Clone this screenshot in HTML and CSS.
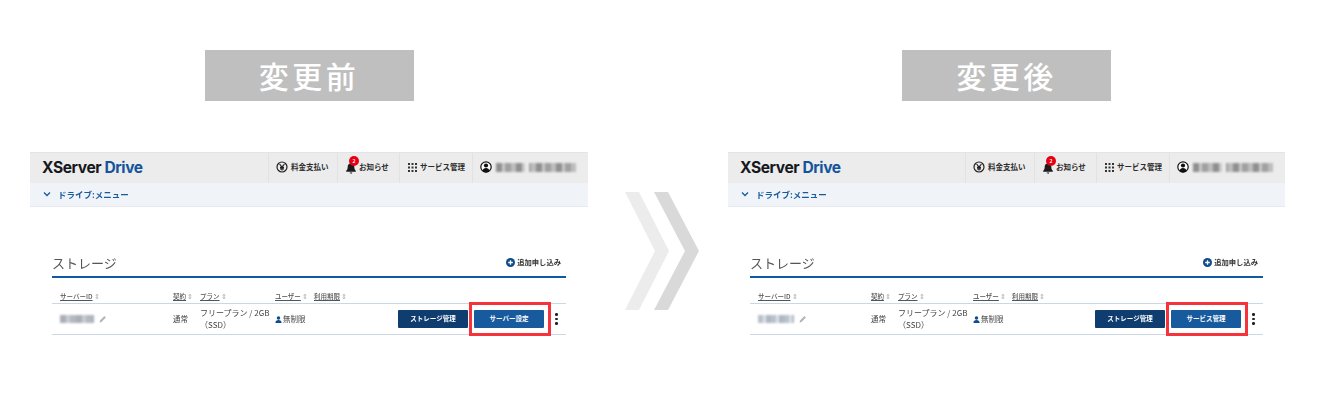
FILE: index.html
```html
<!DOCTYPE html>
<html lang="ja">
<head>
<meta charset="utf-8">
<title>変更前 変更後</title>
<link rel="stylesheet" href="styles.css">
</head>
<body>
<svg class="sprite" width="0" height="0" aria-hidden="true">
  <symbol id="yen" viewBox="0 0 12 12"><circle cx="6" cy="6" r="5" fill="none" stroke="#222" stroke-width="1.2"/><path d="M3.6 3 6 6l2.4-3M6 6v3.4M4 6.4h4M4 7.9h4" fill="none" stroke="#222" stroke-width="1.2"/></symbol>
  <symbol id="bell" viewBox="0 0 10 12"><path d="M5 .5c.6 0 1 .4 1 1 1.6.5 2.3 1.700 2.300 3.300 0 2 .5 3 1.500 4v1H.2v-1c1-1 1.500-2 1.500-4C1.700 3.200 2.400 2 4 1.500c0-.6.4-1 1-1ZM3.700 10.600h2.600C6.200 11.400 5.700 11.800 5 11.800s-1.200-.4-1.300-1.200Z" fill="#1b1b1b"/></symbol>
  <symbol id="grid" viewBox="0 0 9 9"><path d="M0 0h2v2H0zM3.500 0h2v2h-2zM7 0h2v2H7zM0 3.500h2v2H0zM3.500 3.500h2v2h-2zM7 3.500h2v2H7zM0 7h2v2H0zM3.500 7h2v2h-2zM7 7h2v2H7z" fill="#333"/></symbol>
  <symbol id="user-c" viewBox="0 0 12 12"><circle cx="6" cy="6" r="5.200" fill="#fff" stroke="#111" stroke-width="1.200"/><circle cx="6" cy="4.500" r="2.100" fill="#111"/><path d="M2.500 10c.3-2 1.700-3 3.500-3s3.200 1 3.500 3a5 5 0 0 1-7 0Z" fill="#111"/></symbol>
  <symbol id="user" viewBox="0 0 8 8"><circle cx="4" cy="2.200" r="2" fill="#0f4c8a"/><path d="M.5 8c0-2.300 1.400-3.300 3.500-3.300S7.500 5.700 7.500 8Z" fill="#0f4c8a"/></symbol>
  <symbol id="pencil" viewBox="0 0 8 8"><path d="M.6 7.400 1 5.500 5.400 1.100l1.500 1.500L2.500 7Z" fill="#b5b5b5"/></symbol>
  <symbol id="plus" viewBox="0 0 9 9"><circle cx="4.500" cy="4.500" r="4.500" fill="#0f4c8a"/><path d="M2.200 4.500h4.600M4.500 2.200v4.600" stroke="#fff" stroke-width="1.300"/></symbol>
  <symbol id="chev" viewBox="0 0 8 6"><path d="M1 1.500 4 4.500l3-3" fill="none" stroke="#175a9e" stroke-width="1.300"/></symbol>
</svg>

<main class="page">
  <section class="col">
    <h2 class="label">変更前</h2>
    <div class="panel">
      <header class="topbar">
        <div class="logo">XServer <span class="logo-blue">Drive</span></div>
        <nav class="topnav">
          <a class="nav-item nav-pay"><svg class="ic12"><use href="#yen"/></svg>料金支払い</a>
          <a class="nav-item nav-news"><span class="bell"><svg class="ic-bell"><use href="#bell"/></svg><i class="badge">2</i></span>お知らせ</a>
          <a class="nav-item nav-svc"><svg class="ic9"><use href="#grid"/></svg>サービス管理</a>
          <a class="nav-item nav-user"><svg class="ic12"><use href="#user-c"/></svg><span class="mosaic mosaic-user"></span></a>
        </nav>
      </header>
      <div class="menubar"><svg class="ic-chev"><use href="#chev"/></svg>ドライブ:メニュー</div>
      <div class="content">
        <div class="title-row">
          <h3 class="title">ストレージ</h3>
          <a class="add"><svg class="ic9"><use href="#plus"/></svg>追加申し込み</a>
        </div>
        <div class="thead">
          <span class="th c-id"><u>サーバーID</u> <span class="sort">⇕</span></span>
          <span class="th c-contract"><u>契約</u> <span class="sort">⇕</span></span>
          <span class="th c-plan"><u>プラン</u> <span class="sort">⇕</span></span>
          <span class="th c-users"><u>ユーザー</u> <span class="sort">⇕</span></span>
          <span class="th c-term"><u>利用期限</u> <span class="sort">⇕</span></span>
        </div>
        <div class="trow">
          <span class="c-id id-cell"><span class="mosaic mosaic-id"></span><svg class="ic8"><use href="#pencil"/></svg></span>
          <span class="c-contract cell-up">通常</span>
          <span class="c-plan plan">フリープラン / 2GB<br>（SSD）</span>
          <span class="c-users user-cell"><svg class="ic7"><use href="#user"/></svg><span class="cell-up">無制限</span></span>
          <span class="actions">
            <a class="btn btn-dark">ストレージ管理</a>
            <span class="hl"><a class="btn btn-blue">サーバー設定</a></span>
            <span class="dots"><i></i><i></i><i></i></span>
          </span>
        </div>
      </div>
    </div>
  </section>

  <div class="arrows">
    <svg width="75" height="118" viewBox="0 0 75 118"><path d="M0 0h14l30 59-30 59H0l30-59Z" fill="#ececec"/><path d="M29 0h14l31 59-31 59H29l31-59Z" fill="#d9d9d9"/></svg>
  </div>

  <section class="col col-after">
    <h2 class="label">変更後</h2>
    <div class="panel">
      <header class="topbar">
        <div class="logo">XServer <span class="logo-blue">Drive</span></div>
        <nav class="topnav">
          <a class="nav-item nav-pay"><svg class="ic12"><use href="#yen"/></svg>料金支払い</a>
          <a class="nav-item nav-news"><span class="bell"><svg class="ic-bell"><use href="#bell"/></svg><i class="badge">2</i></span>お知らせ</a>
          <a class="nav-item nav-svc"><svg class="ic9"><use href="#grid"/></svg>サービス管理</a>
          <a class="nav-item nav-user"><svg class="ic12"><use href="#user-c"/></svg><span class="mosaic mosaic-user"></span></a>
        </nav>
      </header>
      <div class="menubar"><svg class="ic-chev"><use href="#chev"/></svg>ドライブ:メニュー</div>
      <div class="content">
        <div class="title-row">
          <h3 class="title">ストレージ</h3>
          <a class="add"><svg class="ic9"><use href="#plus"/></svg>追加申し込み</a>
        </div>
        <div class="thead">
          <span class="th c-id"><u>サーバーID</u> <span class="sort">⇕</span></span>
          <span class="th c-contract"><u>契約</u> <span class="sort">⇕</span></span>
          <span class="th c-plan"><u>プラン</u> <span class="sort">⇕</span></span>
          <span class="th c-users"><u>ユーザー</u> <span class="sort">⇕</span></span>
          <span class="th c-term"><u>利用期限</u> <span class="sort">⇕</span></span>
        </div>
        <div class="trow">
          <span class="c-id id-cell"><span class="mosaic mosaic-id mosaic-light"></span><svg class="ic8"><use href="#pencil"/></svg></span>
          <span class="c-contract cell-up">通常</span>
          <span class="c-plan plan">フリープラン / 2GB<br>（SSD）</span>
          <span class="c-users user-cell"><svg class="ic7"><use href="#user"/></svg><span class="cell-up">無制限</span></span>
          <span class="actions">
            <a class="btn btn-dark">ストレージ管理</a>
            <span class="hl"><a class="btn btn-blue">サービス管理</a></span>
            <span class="dots"><i></i><i></i><i></i></span>
          </span>
        </div>
      </div>
    </div>
  </section>
</main>
</body>
</html>
```

FILE: styles.css
```css
* { box-sizing: border-box; }
html, body { margin: 0; padding: 0; background: #fff; }
body {
  width: 1324px;
  height: 413px;
  overflow: hidden;
  font-family: "Noto Sans CJK JP", "Noto Sans", sans-serif;
  color: #333;
}
.sprite { position: absolute; }
.page { display: flex; padding: 50px 0 0 30px; }
.col { width: 558px; display: flex; flex-direction: column; flex: none; }
.col-after { width: 557px; }
.arrows { width: 140px; flex: none; padding: 142px 0 0 37px; }
.arrows svg { display: block; }

.label {
  align-self: center;
  width: 209px;
  height: 51px;
  margin: 0 0 51px;
  background: #bfbfbf;
  color: #fff;
  font-size: 30px;
  font-weight: 500;
  line-height: 51px;
  letter-spacing: 3.5px;
  text-align: center;
}

.panel { filter: blur(.3px); }
.topbar {
  height: 31px;
  background: #ececec;
  border-top: 1px solid #e4e4e4;
  display: flex;
  justify-content: space-between;
  align-items: stretch;
}
.logo {
  padding-left: 12px;
  font-family: Inter, "Liberation Sans", sans-serif;
  font-weight: 700;
  font-size: 15.600px;
  line-height: 30px;
  letter-spacing: -.42px;
  color: #16181d;
}
.logo-blue { color: #14549c; }
.topnav { display: flex; }
.nav-item {
  display: flex;
  align-items: center;
  gap: 4px;
  border-left: 1px solid #e2e2e2;
  font-size: 7.500px;
  font-weight: 700;
  line-height: 10px;
  color: #2c2c2c;
  white-space: nowrap;
  padding-left: 7px;
  padding-bottom: 2px;
}
.nav-pay { width: 69px; gap: 3px; }
.nav-news { width: 62px; gap: 3px; padding-left: 8px; }
.nav-svc { width: 73px; padding-left: 8px; gap: 3px; }
.nav-user { width: 116px; padding-left: 7px; }
.ic12 { width: 12px; height: 12px; flex: none; }
.ic9 { width: 9px; height: 9px; flex: none; }
.ic8 { width: 8px; height: 8px; flex: none; }
.ic7 { width: 7px; height: 7px; flex: none; }
.bell { position: relative; display: block; width: 10px; height: 12px; margin-top: 2px; }
.ic-bell { display: block; width: 10px; height: 12px; }
.badge {
  position: absolute;
  top: -6px;
  left: 3px;
  width: 10px;
  height: 10px;
  border-radius: 50%;
  background: #e60012;
  color: #fff;
  font-size: 5px;
  font-style: normal;
  line-height: 10px;
  text-align: center;
}
.mosaic { display: block; flex: none; filter: blur(.8px); }
.mosaic-user {
  width: 80px;
  height: 9px;
  background:
    linear-gradient(90deg, transparent 0 29px, #ececec 29px 33px, transparent 33px),
    repeating-linear-gradient(90deg, #8f8f8f 0 6px, #c9c9c9 6px 9px, #a0a0a0 9px 15px, #bdbdbd 15px 20px);
}
.mosaic-id {
  width: 34px;
  height: 8px;
  background: repeating-linear-gradient(90deg, #a9aeb6 0 6px, #c8ccd2 6px 10px, #b4b8bf 10px 16px);
}
.mosaic-light {
  width: 36px;
  background: repeating-linear-gradient(90deg, #b8c1cc 0 5px, #dde1e6 5px 8px, #aeb7c2 8px 13px);
}

.menubar {
  height: 24px;
  background: #f0f4f8;
  border-bottom: 1px solid #e6e9ed;
  display: flex;
  align-items: center;
  gap: 7px;
  padding: 0 0 1px 13px;
  font-size: 8.500px;
  font-weight: 700;
  color: #175a9e;
}
.ic-chev { width: 8px; height: 6px; flex: none; }

.content { padding: 48px 22px 0; }
.title-row {
  height: 23px;
  border-bottom: 2px solid #0f5aa0;
  display: flex;
  justify-content: space-between;
  align-items: flex-start;
}
.title {
  margin: -1px 0 0;
  font-size: 13px;
  font-weight: 400;
  line-height: 18px;
  color: #555;
}
.add {
  display: flex;
  align-items: center;
  gap: 2px;
  margin: 3px 5px 0 0;
  font-size: 7.300px;
  font-weight: 700;
  color: #333;
  line-height: 9px;
}

.thead {
  height: 26px;
  display: flex;
  align-items: flex-end;
  padding-bottom: 2px;
  border-bottom: 1px solid #ccd7e3;
}
.th { font-size: 6.500px; font-weight: 500; color: #555; line-height: 9px; white-space: nowrap; }
.th u { text-decoration: underline; }
.sort { color: #aaa; font-weight: 400; }
.c-id { width: 121px; padding-left: 8px; flex: none; }
.c-contract { width: 27px; flex: none; }
.c-plan { width: 75px; flex: none; }
.c-users { width: 39px; flex: none; }
.c-term { flex: none; }
.cell-up { padding-bottom: 2px; }

.trow {
  height: 31px;
  display: flex;
  align-items: center;
  border-bottom: 1px solid #ccd7e3;
  font-size: 7.500px;
  color: #444;
}
.id-cell { display: flex; align-items: center; gap: 5px; }
.plan { line-height: 12px; font-size: 8px; }
.user-cell { display: flex; align-items: center; gap: 1px; width: 80px; }
.actions {
  margin-left: auto;
  display: flex;
  align-items: center;
  gap: 6px;
  width: 168px;
}
.btn {
  display: block;
  width: 70px;
  height: 18px;
  text-align: center;
  font-size: 6.500px;
  font-weight: 700;
  line-height: 17px;
  color: #fff;
  border-radius: 1px;
}
.btn-dark { background: #0f3d70; }
.btn-blue { background: #175a9e; }
.hl { display: block; position: relative; }
.hl::after {
  content: "";
  position: absolute;
  top: -8px;
  bottom: -8px;
  left: -5px;
  right: -7px;
  border: 3px solid #f5333a;
}
.dots {
  margin-left: 5px;
  display: flex;
  flex-direction: column;
  gap: 2px;
}
.dots i { display: block; width: 2.500px; height: 2.500px; background: #222; border-radius: 50%; }
```
